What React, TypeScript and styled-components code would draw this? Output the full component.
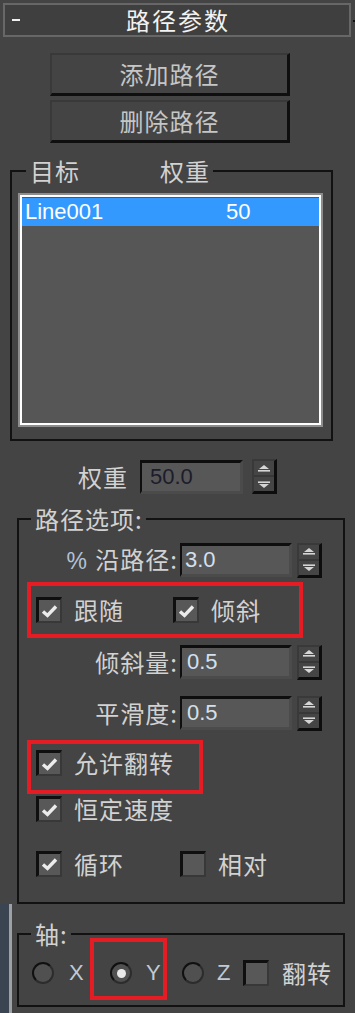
import React from "react";
import styled, { createGlobalStyle } from "styled-components";

const GlobalStyle = createGlobalStyle`
  html, body { margin: 0; padding: 0; background: #444444; }
  body { font-family: "Noto Sans CJK SC", "Noto Sans", sans-serif; }
  * { box-sizing: border-box; }
`;

const CJK = `"Noto Sans CJK SC", "Noto Sans", sans-serif`;
const LATIN = `"Liberation Sans", Arial, sans-serif`;

const Panel = styled.div`
  width: 355px;
  height: 1013px;
  background: #444444;
  overflow: hidden;
  display: flex;
  flex-direction: column;
  color: #d2d2d2;
  font-family: ${CJK};
`;

const Header = styled.div`
  position: relative;
  margin: 3px 4px 0 3px;
  height: 34px;
  border: 2px solid #676767;
  background: #3f3f3f;
  display: grid;
  grid-template-columns: 1fr auto 1fr;
  align-items: center;
  &::after {
    content: "";
    position: absolute;
    right: -6px;
    top: 15px;
    width: 2px;
    height: 2px;
    background: #111;
  }
`;

const Minus = styled.span`
  width: 8px;
  height: 2px;
  margin-left: 7px;
  background: #f0f0f0;
`;

const Title = styled.span`
  font-size: 24px;
  line-height: 28px;
  letter-spacing: 2px;
  color: #f2f2f2;
  padding-left: 2px;
`;

const ButtonStack = styled.div`
  display: flex;
  flex-direction: column;
  gap: 4px;
  margin: 16px 0 0 50px;
  width: 240px;
`;

const ActionButton = styled.button`
  height: 43px;
  padding: 0;
  background: #444444;
  border-style: solid;
  border-width: 2px 3px 3px 2px;
  border-color: #393939 #0f0f0f #0f0f0f #393939;
  color: #c6c6c6;
  font-family: ${CJK};
  font-size: 24px;
  line-height: 1;
  letter-spacing: 1px;
`;

const GroupBox = styled.div<{ $top: number; $left: number; $width: number }>`
  position: relative;
  flex: none;
  margin: ${(p) => p.$top}px 0 0 ${(p) => p.$left}px;
  width: ${(p) => p.$width}px;
  border: 2px solid #121212;
`;

const Legend = styled.div<{ $left: number }>`
  position: absolute;
  top: -14px;
  left: ${(p) => p.$left}px;
  padding: 0 3px 0 4px;
  background: #444444;
  display: flex;
  font-size: 24px;
  line-height: 26px;
  letter-spacing: 1px;
  color: #d2d2d2;
`;

const LegendGap = styled.span`
  margin-left: 80px;
`;

const TargetBody = styled.div`
  padding: 21px 8px 12px 6px;
`;

const ListFrame = styled.div`
  height: 234px;
  border: 2px solid #8d8d8d;
`;

const ListInner = styled.div`
  height: 100%;
  border: 2px solid #ffffff;
  background: #565656;
  padding-top: 1px;
`;

const ListRow = styled.div<{ $selected?: boolean }>`
  height: 28px;
  display: flex;
  align-items: center;
  padding-left: 3px;
  background: ${(p) => (p.$selected ? "#3399ff" : "transparent")};
  color: #ffffff;
  font-family: ${LATIN};
  font-size: 22px;
`;

const NameCell = styled.span`
  width: 201px;
`;

const WeightRow = styled.div`
  display: flex;
  align-items: center;
  margin: 18px 0 0 78px;
  height: 35px;
`;

const Label = styled.span<{ $width?: number }>`
  font-size: 24px;
  line-height: 30px;
  letter-spacing: 1px;
  color: #d2d2d2;
  white-space: nowrap;
  ${(p) => (p.$width ? `width: ${p.$width}px; text-align: right;` : "")}
`;

const LatinMark = styled.span`
  font-family: ${LATIN};
  font-size: 23px;
  color: #b4c2d6;
  letter-spacing: 0;
  margin-right: 2px;
`;

const NumField = styled.div<{ $width: number; $dark?: boolean; $pad: number; $gap: number }>`
  width: ${(p) => p.$width}px;
  height: 34px;
  margin-left: ${(p) => p.$gap}px;
  display: flex;
  align-items: center;
  padding-left: ${(p) => p.$pad}px;
  background: #575757;
  border-style: solid;
  border-width: 3px 3px 3px 2px;
  border-color: #0e0e0e #4b4b4b #4b4b4b #0e0e0e;
  font-family: ${LATIN};
  font-size: 22px;
  color: ${(p) => (p.$dark ? "#1c1c2c" : "#d4e0ee")};
`;

const Spinner = styled.div<{ $gap: number }>`
  width: 25px;
  height: 35px;
  margin-left: ${(p) => p.$gap}px;
  display: flex;
  flex-direction: column;
  background: #454545;
  border-style: solid;
  border-width: 2px 3px 3px 2px;
  border-color: #393939 #0d0d0d #0d0d0d #393939;
`;

const SpinHalf = styled.div<{ $top?: boolean }>`
  flex: 1;
  display: flex;
  align-items: center;
  justify-content: center;
  border-bottom: ${(p) => (p.$top ? "2px solid #383838" : "none")};
`;

const PathBody = styled.div`
  display: flex;
  flex-direction: column;
  padding: 23px 0 25px 0;
`;

const SpinRow = styled.div<{ $mt: number }>`
  display: flex;
  align-items: center;
  height: 34px;
  margin-top: ${(p) => p.$mt}px;
`;

const Highlight = styled.div<{ $width: number; $height: number; $mt?: number; $ml?: number; $pad: string; $align?: string }>`
  flex: none;
  display: flex;
  align-items: ${(p) => p.$align || "center"};
  width: ${(p) => p.$width}px;
  height: ${(p) => p.$height}px;
  margin-top: ${(p) => p.$mt ?? 0}px;
  margin-left: ${(p) => p.$ml ?? 0}px;
  padding: ${(p) => p.$pad};
  border: 4px solid #e61c24;
`;

const CheckRow = styled.div<{ $mt: number; $h: number }>`
  display: flex;
  align-items: center;
  height: ${(p) => p.$h}px;
  margin-top: ${(p) => p.$mt}px;
  padding-left: 17px;
`;

const CheckItem = styled.div<{ $width?: number }>`
  display: flex;
  align-items: center;
  gap: 12px;
  ${(p) => (p.$width ? `width: ${p.$width}px;` : "")}
`;

const Box = styled.span`
  flex: none;
  width: 26px;
  height: 26px;
  display: flex;
  align-items: center;
  justify-content: center;
  background: #585858;
  border-style: solid;
  border-width: 3px 2px 2px 3px;
  border-color: #0f0f0f #383838 #383838 #0f0f0f;
`;

const LowerArea = styled.div`
  flex: 1;
  display: flex;
`;

const SideStrip = styled.div`
  width: 12px;
  flex: none;
  background: #3b4552;
  border-right: 3px solid #9ca1a6;
`;

const LowerContent = styled.div`
  flex: 1;
  display: flex;
  flex-direction: column;
`;

const AxisRow = styled.div`
  display: flex;
  align-items: center;
  height: 70px;
  padding: 3px 0 5px 0;
`;

const RadioItem = styled.div<{ $ml: number; $gap: number; $mt?: number }>`
  display: flex;
  align-items: center;
  gap: ${(p) => p.$gap}px;
  margin-left: ${(p) => p.$ml}px;
  margin-top: ${(p) => p.$mt ?? 0}px;
`;

const Radio = styled.span<{ $on?: boolean }>`
  flex: none;
  width: 22px;
  height: 22px;
  border-radius: 50%;
  background: #505050;
  border: 2px solid #101010;
  border-right-color: #2c2c2c;
  border-bottom-color: #2c2c2c;
  display: flex;
  align-items: center;
  justify-content: center;
  &::after {
    content: "";
    display: ${(p) => (p.$on ? "block" : "none")};
    width: 9px;
    height: 9px;
    border-radius: 50%;
    background: #e8e8e8;
  }
`;

const AxisLetter = styled.span`
  font-family: ${LATIN};
  font-size: 22px;
  line-height: 24px;
  color: #c0cad6;
  width: 11px;
`;

const Arrow = ({ up }: { up?: boolean }) => (
  <svg width="12" height="7" viewBox="0 0 12 7">
    {up ? (
      <>
        <polygon points="6,0 11,4 1,4" fill="#d6d6d6" />
        <rect x="0" y="5" width="12" height="1.6" fill="#d6d6d6" />
      </>
    ) : (
      <>
        <rect x="0" y="0.4" width="12" height="1.6" fill="#d6d6d6" />
        <polygon points="1,3 11,3 6,7" fill="#d6d6d6" />
      </>
    )}
  </svg>
);

const Spin = ({ gap }: { gap: number }) => (
  <Spinner $gap={gap}>
    <SpinHalf $top>
      <Arrow up />
    </SpinHalf>
    <SpinHalf>
      <Arrow />
    </SpinHalf>
  </Spinner>
);

const Check = ({ on }: { on?: boolean }) => (
  <Box>
    {on && (
      <svg width="17" height="14" viewBox="0 0 17 14">
        <path d="M2 7.5 L6.5 11.5 L15 2.5" stroke="#ececec" strokeWidth="3.4" fill="none" />
      </svg>
    )}
  </Box>
);

export default function App() {
  return (
    <>
      <GlobalStyle />
      <Panel>
        <Header>
          <Minus />
          <Title>路径参数</Title>
          <span />
        </Header>

        <ButtonStack>
          <ActionButton>添加路径</ActionButton>
          <ActionButton>删除路径</ActionButton>
        </ButtonStack>

        <GroupBox $top={27} $left={10} $width={323}>
          <Legend $left={14}>
            <span>目标</span>
            <LegendGap>权重</LegendGap>
          </Legend>
          <TargetBody>
            <ListFrame>
              <ListInner>
                <ListRow $selected>
                  <NameCell>Line001</NameCell>
                  <span>50</span>
                </ListRow>
              </ListInner>
            </ListFrame>
          </TargetBody>
        </GroupBox>

        <WeightRow>
          <Label>权重</Label>
          <NumField $width={103} $pad={8} $gap={12} $dark>
            50.0
          </NumField>
          <Spin gap={9} />
        </WeightRow>

        <GroupBox $top={24} $left={17} $width={328}>
          <Legend $left={12}>路径选项:</Legend>
          <PathBody>
            <SpinRow $mt={0}>
              <Label $width={159}>
                <LatinMark>%</LatinMark> 沿路径:
              </Label>
              <NumField $width={112} $pad={3} $gap={2}>
                3.0
              </NumField>
              <Spin gap={5} />
            </SpinRow>

            <Highlight $width={276} $height={56} $mt={5} $ml={8} $pad="0 0 0 5px">
              <CheckItem $width={137}>
                <Check on />
                <Label>跟随</Label>
              </CheckItem>
              <CheckItem>
                <Check on />
                <Label>倾斜</Label>
              </CheckItem>
            </Highlight>

            <SpinRow $mt={7}>
              <Label $width={159}>倾斜量:</Label>
              <NumField $width={112} $pad={5} $gap={2}>
                0.5
              </NumField>
              <Spin gap={5} />
            </SpinRow>

            <SpinRow $mt={17}>
              <Label $width={159}>平滑度:</Label>
              <NumField $width={112} $pad={5} $gap={2}>
                0.5
              </NumField>
              <Spin gap={5} />
            </SpinRow>

            <Highlight $width={176} $height={54} $mt={10} $ml={8} $pad="4px 0 0 5px" $align="flex-start">
              <CheckItem>
                <Check on />
                <Label>允许翻转</Label>
              </CheckItem>
            </Highlight>

            <CheckRow $mt={2} $h={26}>
              <CheckItem>
                <Check on />
                <Label>恒定速度</Label>
              </CheckItem>
            </CheckRow>

            <CheckRow $mt={28} $h={27}>
              <CheckItem $width={144}>
                <Check on />
                <Label>循环</Label>
              </CheckItem>
              <CheckItem>
                <Check />
                <Label>相对</Label>
              </CheckItem>
            </CheckRow>
          </PathBody>
        </GroupBox>

        <LowerArea>
          <SideStrip />
          <LowerContent>
            <GroupBox $top={29} $left={5} $width={328}>
              <Legend $left={12}>轴:</Legend>
              <AxisRow>
                <RadioItem $ml={13} $gap={15} $mt={8}>
                  <Radio />
                  <AxisLetter>X</AxisLetter>
                </RadioItem>
                <Highlight $width={77} $height={62} $ml={10} $pad="0 0 0 16px">
                  <RadioItem $ml={0} $gap={14} $mt={8}>
                    <Radio $on />
                    <AxisLetter>Y</AxisLetter>
                  </RadioItem>
                </Highlight>
                <RadioItem $ml={15} $gap={13} $mt={8}>
                  <Radio />
                  <AxisLetter>Z</AxisLetter>
                </RadioItem>
                <RadioItem $ml={15} $gap={13} $mt={8}>
                  <Check />
                  <Label>翻转</Label>
                </RadioItem>
              </AxisRow>
            </GroupBox>
          </LowerContent>
        </LowerArea>
      </Panel>
    </>
  );
}
